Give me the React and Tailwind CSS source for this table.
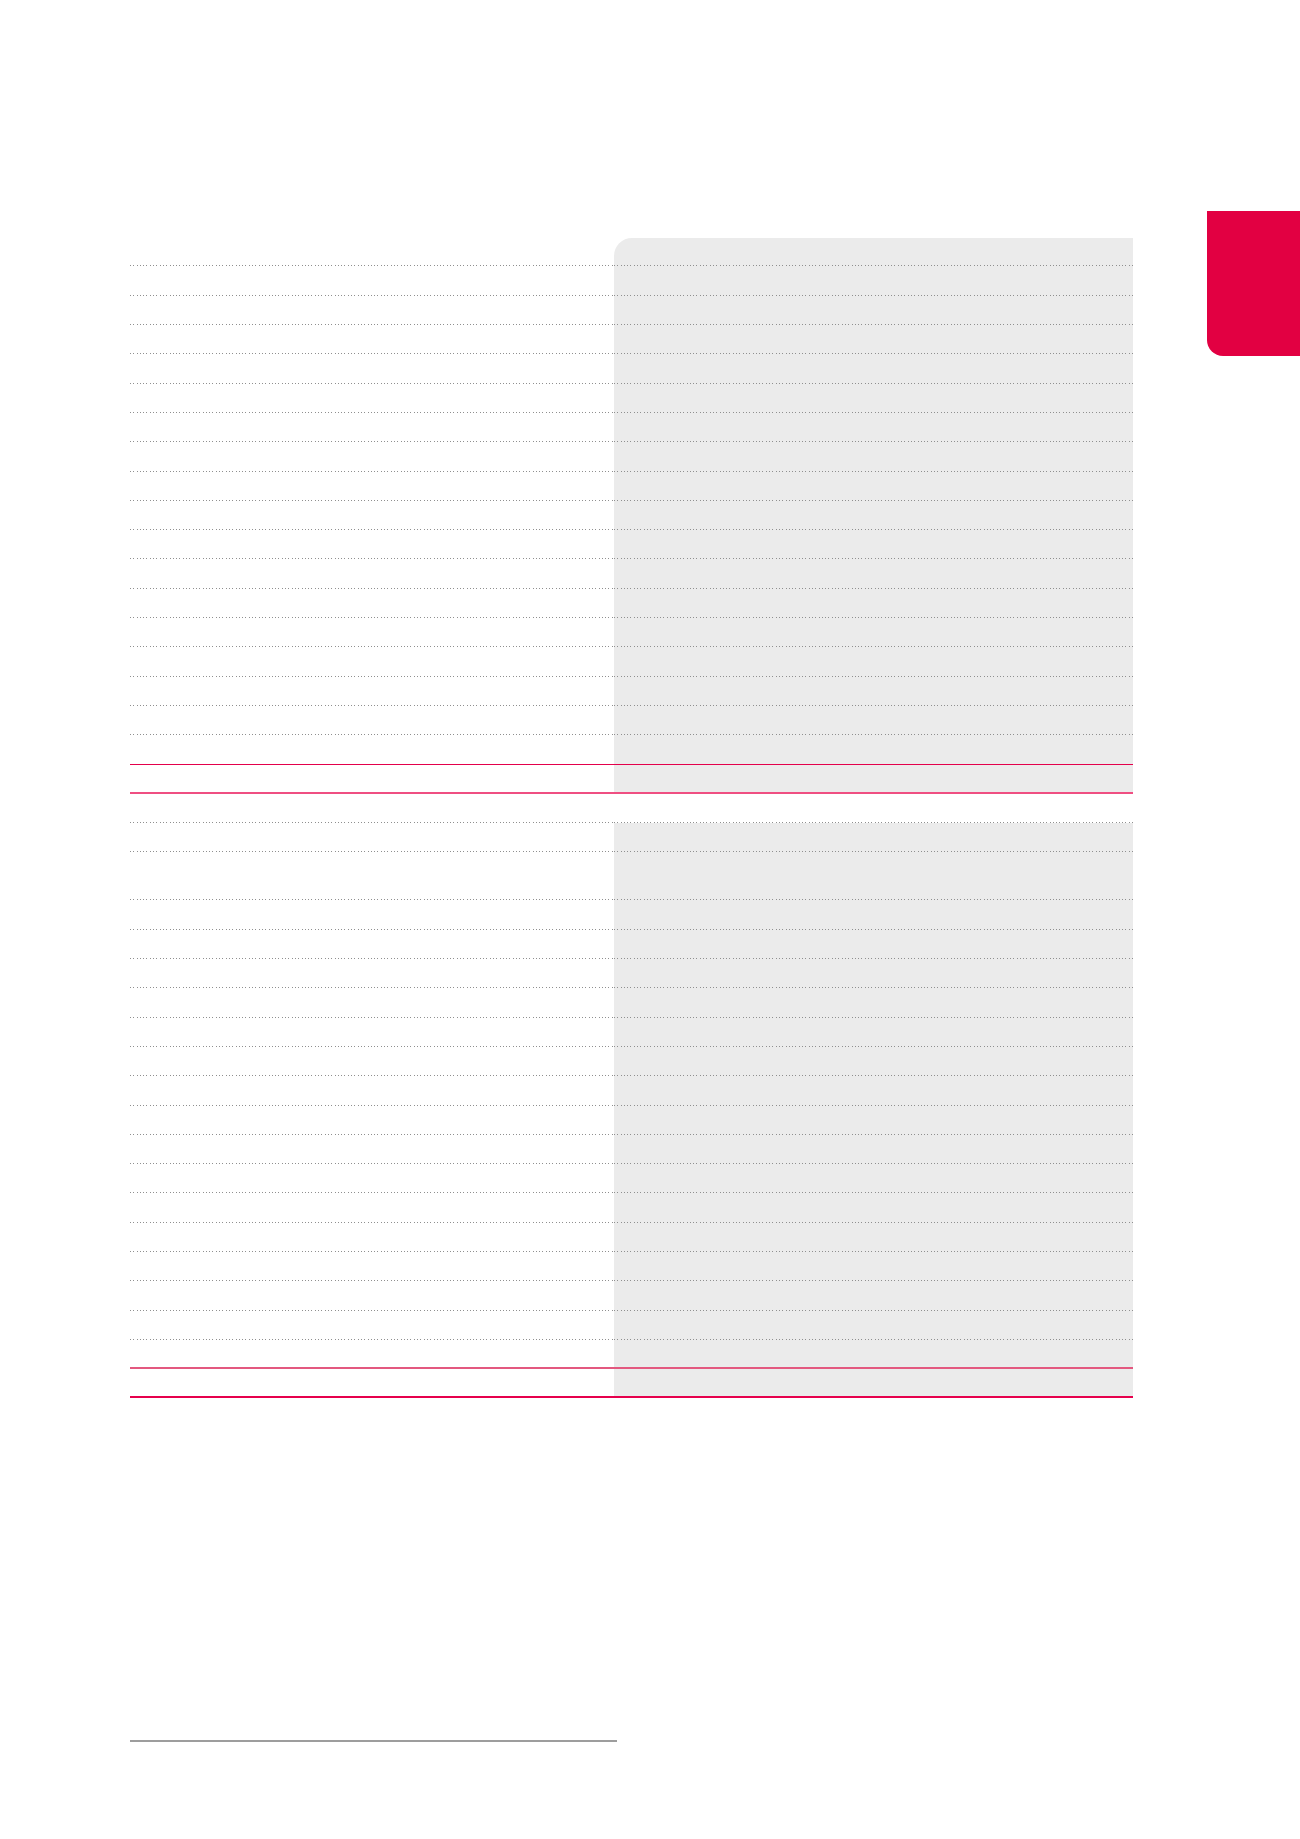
import React from "react";

function Line({ kind }) {
  if (kind === "dot")
    return (
      <div className="h-px w-full bg-[repeating-linear-gradient(90deg,#8f8f8f_0px,#8f8f8f_1px,transparent_1px,transparent_3.3px)]" />
    );
  if (kind === "red")
    return <div className="h-px w-full bg-[#e4004b]" />;
  if (kind === "pinkA")
    return <div className="h-[2px] w-full bg-[#ef4f82]" />;
  if (kind === "pinkB")
    return <div className="h-[2px] w-full bg-[#e3587f]" />;
  if (kind === "redB")
    return <div className="h-[2px] w-full bg-[#e6004c]" />;
  return null;
}

function Row({ h, kind, grey = true, first = false }) {
  return (
    <div className="flex w-full" style={{ height: h }}>
      <div className="flex w-[483.6px] flex-col">
        <div className="flex-1" />
        <Line kind={kind} />
      </div>
      <div
        className={
          "flex flex-1 flex-col " +
          (grey ? "bg-[#ebebeb] " : "") +
          (first ? "rounded-tl-[18px]" : "")
        }
      >
        <div className="flex-1" />
        <Line kind={kind} />
      </div>
    </div>
  );
}

export default function App() {
  const sec1 = [];
  sec1.push(<Row key="r1" h={28.8} kind="dot" first />);
  for (let i = 0; i < 16; i++) sec1.push(<Row key={"a" + i} h={29.3} kind="dot" />);
  sec1.push(<Row key="p1" h={29.3} kind="red" />);
  sec1.push(<Row key="p2" h={29.3} kind="pinkA" />);

  const sec2 = [];
  sec2.push(<Row key="s" h={29.3} kind="dot" grey={false} />);
  sec2.push(<Row key="ra" h={29.3} kind="dot" />);
  sec2.push(<Row key="rb" h={48} kind="dot" />);
  for (let i = 0; i < 15; i++) sec2.push(<Row key={"b" + i} h={29.3} kind="dot" />);
  sec2.push(<Row key="p3" h={29} kind="pinkB" />);
  sec2.push(<Row key="p4" h={29.3} kind="redB" />);

  return (
    <div className="flex min-h-[1839px] w-[1300px] items-start bg-white font-['Liberation_Sans',sans-serif]">
      <div className="ml-[130px] flex w-[1003px] flex-col pt-[237.7px]">
        <div className="flex flex-col">{sec1}</div>
        <div className="flex flex-col">{sec2}</div>
        <div className="mt-[342px] h-[2px] w-[486.6px] bg-[#9d9d9d]" />
      </div>
      <div className="flex-1" />
      <div className="mt-[211px] h-[145px] w-[93px] rounded-bl-[16px] bg-[#e20042]" />
    </div>
  );
}
